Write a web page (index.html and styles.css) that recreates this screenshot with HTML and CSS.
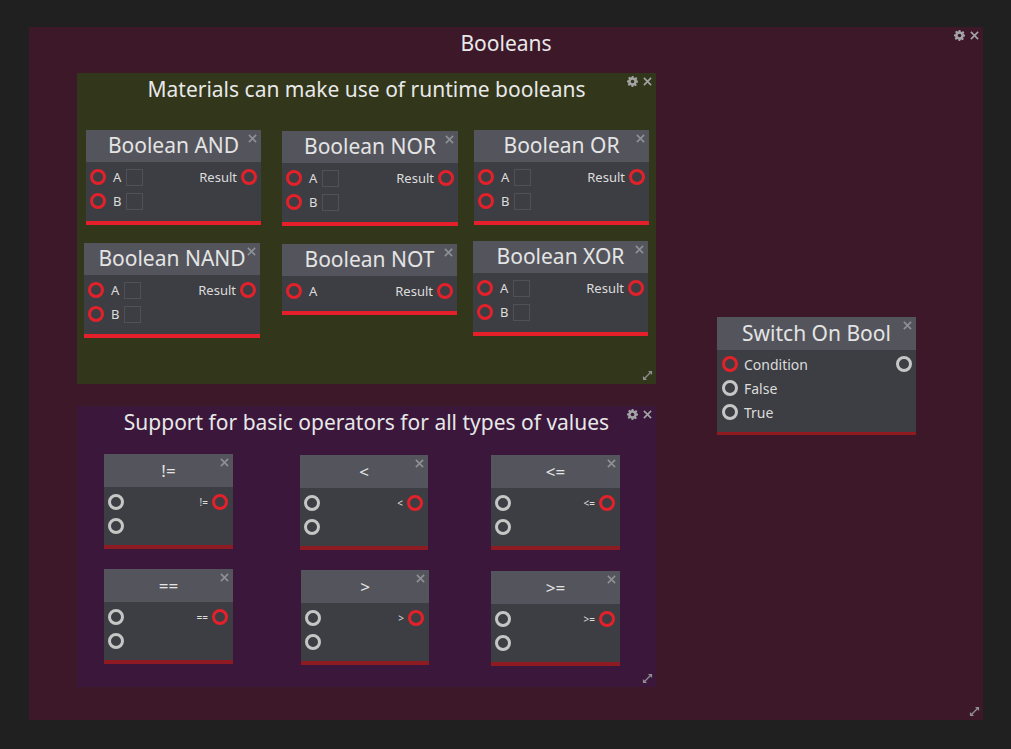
FILE: index.html
```html
<!DOCTYPE html>
<html>
<head>
<meta charset="utf-8">
<link rel="stylesheet" href="styles.css">
</head>
<body>
<div class="canvas">
  <svg width="0" height="0" class="defs">
    <defs>
      <symbol id="gear" viewBox="0 0 12 12">
        <path fill="currentColor" fill-rule="evenodd" d="M5 0h2l.3 1.6 1.2.5 1.4-.9 1.4 1.4-.9 1.4.5 1.2L12 5v2l-1.6.3-.5 1.2.9 1.4-1.4 1.4-1.4-.9-1.2.5L7 12H5l-.3-1.6-1.2-.5-1.4.9-1.4-1.4.9-1.4-.5-1.2L0 7V5l1.6-.3.5-1.2-.9-1.4 1.4-1.4 1.4.9 1.2-.5zM6 4a2 2 0 1 0 0 4 2 2 0 1 0 0-4z"/>
      </symbol>
      <symbol id="close" viewBox="0 0 10 10">
        <path d="M1 1L9 9M9 1L1 9" stroke="currentColor" stroke-width="1.8" fill="none"/>
      </symbol>
      <symbol id="resize" viewBox="0 0 12 12">
        <path d="M2.5 9.5L9.5 2.5" stroke="currentColor" stroke-width="1.4" fill="none"/>
        <path d="M1 11V6.5L5.5 11z M11 1v4.5L6.5 1z" fill="currentColor"/>
      </symbol>
    </defs>
  </svg>

  <div class="frame f-outer">
    <div class="frame-title">Booleans</div>
    <div class="frame-tools"><svg class="ic-gear"><use href="#gear"/></svg><svg class="ic-x"><use href="#close"/></svg></div>
    <svg class="ic-resize"><use href="#resize"/></svg>
  </div>

  <div class="frame f-green">
    <div class="frame-title">Materials can make use of runtime booleans</div>
    <div class="frame-tools"><svg class="ic-gear"><use href="#gear"/></svg><svg class="ic-x"><use href="#close"/></svg></div>
    <svg class="ic-resize"><use href="#resize"/></svg>
  </div>

  <div class="frame f-purple">
    <div class="frame-title">Support for basic operators for all types of values</div>
    <div class="frame-tools"><svg class="ic-gear"><use href="#gear"/></svg><svg class="ic-x"><use href="#close"/></svg></div>
    <svg class="ic-resize"><use href="#resize"/></svg>
  </div>

  <!-- Boolean nodes -->
  <div class="node bool n-and">
    <div class="node-head">Boolean AND<svg class="node-x"><use href="#close"/></svg></div>
    <div class="node-body">
      <div class="row"><span class="pin red"></span><span class="lbl">A</span><span class="chk"></span><span class="out">Result</span><span class="pin red"></span></div>
      <div class="row"><span class="pin red"></span><span class="lbl">B</span><span class="chk"></span></div>
    </div>
  </div>

  <div class="node bool n-nor">
    <div class="node-head">Boolean NOR<svg class="node-x"><use href="#close"/></svg></div>
    <div class="node-body">
      <div class="row"><span class="pin red"></span><span class="lbl">A</span><span class="chk"></span><span class="out">Result</span><span class="pin red"></span></div>
      <div class="row"><span class="pin red"></span><span class="lbl">B</span><span class="chk"></span></div>
    </div>
  </div>

  <div class="node bool n-or">
    <div class="node-head">Boolean OR<svg class="node-x"><use href="#close"/></svg></div>
    <div class="node-body">
      <div class="row"><span class="pin red"></span><span class="lbl">A</span><span class="chk"></span><span class="out">Result</span><span class="pin red"></span></div>
      <div class="row"><span class="pin red"></span><span class="lbl">B</span><span class="chk"></span></div>
    </div>
  </div>

  <div class="node bool n-nand">
    <div class="node-head">Boolean NAND<svg class="node-x"><use href="#close"/></svg></div>
    <div class="node-body">
      <div class="row"><span class="pin red"></span><span class="lbl">A</span><span class="chk"></span><span class="out">Result</span><span class="pin red"></span></div>
      <div class="row"><span class="pin red"></span><span class="lbl">B</span><span class="chk"></span></div>
    </div>
  </div>

  <div class="node bool n-not">
    <div class="node-head">Boolean NOT<svg class="node-x"><use href="#close"/></svg></div>
    <div class="node-body">
      <div class="row"><span class="pin red"></span><span class="lbl">A</span><span class="out">Result</span><span class="pin red"></span></div>
    </div>
  </div>

  <div class="node bool n-xor">
    <div class="node-head">Boolean XOR<svg class="node-x"><use href="#close"/></svg></div>
    <div class="node-body">
      <div class="row"><span class="pin red"></span><span class="lbl">A</span><span class="chk"></span><span class="out">Result</span><span class="pin red"></span></div>
      <div class="row"><span class="pin red"></span><span class="lbl">B</span><span class="chk"></span></div>
    </div>
  </div>

  <!-- Switch -->
  <div class="node sw n-switch">
    <div class="node-head">Switch On Bool<svg class="node-x"><use href="#close"/></svg></div>
    <div class="node-body">
      <div class="row"><span class="pin red"></span><span class="lbl">Condition</span><span class="out"></span><span class="pin gray"></span></div>
      <div class="row"><span class="pin gray"></span><span class="lbl">False</span></div>
      <div class="row"><span class="pin gray"></span><span class="lbl">True</span></div>
    </div>
  </div>

  <!-- Operator nodes -->
  <div class="node op n-ne">
    <div class="node-head">!=<svg class="node-x"><use href="#close"/></svg></div>
    <div class="node-body">
      <div class="row"><span class="pin gray"></span><span class="out">!=</span><span class="pin red"></span></div>
      <div class="row"><span class="pin gray"></span></div>
    </div>
  </div>

  <div class="node op n-lt">
    <div class="node-head">&lt;<svg class="node-x"><use href="#close"/></svg></div>
    <div class="node-body">
      <div class="row"><span class="pin gray"></span><span class="out">&lt;</span><span class="pin red"></span></div>
      <div class="row"><span class="pin gray"></span></div>
    </div>
  </div>

  <div class="node op n-le">
    <div class="node-head">&lt;=<svg class="node-x"><use href="#close"/></svg></div>
    <div class="node-body">
      <div class="row"><span class="pin gray"></span><span class="out">&lt;=</span><span class="pin red"></span></div>
      <div class="row"><span class="pin gray"></span></div>
    </div>
  </div>

  <div class="node op n-eq">
    <div class="node-head">==<svg class="node-x"><use href="#close"/></svg></div>
    <div class="node-body">
      <div class="row"><span class="pin gray"></span><span class="out">==</span><span class="pin red"></span></div>
      <div class="row"><span class="pin gray"></span></div>
    </div>
  </div>

  <div class="node op n-gt">
    <div class="node-head">&gt;<svg class="node-x"><use href="#close"/></svg></div>
    <div class="node-body">
      <div class="row"><span class="pin gray"></span><span class="out">&gt;</span><span class="pin red"></span></div>
      <div class="row"><span class="pin gray"></span></div>
    </div>
  </div>

  <div class="node op n-ge">
    <div class="node-head">&gt;=<svg class="node-x"><use href="#close"/></svg></div>
    <div class="node-body">
      <div class="row"><span class="pin gray"></span><span class="out">&gt;=</span><span class="pin red"></span></div>
      <div class="row"><span class="pin gray"></span></div>
    </div>
  </div>
</div>
</body>
</html>
```
FILE: styles.css
```css
html, body {
  margin: 0;
  padding: 0;
  width: 1011px;
  height: 749px;
  overflow: hidden;
  background: #202020;
  font-family: "Noto Sans", "DejaVu Sans", sans-serif;
  color: #e2e2e2;
}

.canvas {
  position: relative;
  width: 1011px;
  height: 749px;
}

.defs {
  position: absolute;
}

/* ---------- frames (comment boxes) ---------- */
.frame {
  position: absolute;
  box-sizing: border-box;
}

.f-outer {
  left: 29px;
  top: 27px;
  width: 954px;
  height: 693px;
  background: #3c1829;
}

.f-green {
  left: 77px;
  top: 73px;
  width: 579px;
  height: 311px;
  background: #32361a;
}

.f-purple {
  left: 77px;
  top: 406px;
  width: 579px;
  height: 281px;
  background: #3a173b;
}

.frame-title {
  text-align: center;
  font-size: 21px;
  line-height: 30px;
  padding-top: 1px;
  color: #e8e8e8;
}

.f-green .frame-title,
.f-purple .frame-title {
  padding-top: 1px;
}

.frame-tools {
  position: absolute;
  right: 4px;
  top: 3px;
  display: flex;
  gap: 5px;
  align-items: center;
  color: #a3a3a6;
}

.ic-gear {
  width: 11px;
  height: 11px;
}

.ic-x {
  width: 9px;
  height: 9px;
}

.ic-resize {
  position: absolute;
  right: 3px;
  bottom: 3px;
  width: 11px;
  height: 11px;
  color: #8e8e90;
}

/* ---------- nodes ---------- */
.node {
  position: absolute;
  background: #3d3e43;
  display: flex;
  flex-direction: column;
}

.node-head {
  position: relative;
  background: #54555c;
  text-align: center;
  color: #e4e4e4;
}

.node-x {
  position: absolute;
  right: 4px;
  top: 4px;
  width: 9px;
  height: 9px;
  color: #8f9096;
}

.node-body {
  display: flex;
  flex-direction: column;
  gap: 4px;
  padding: 5px 4px 10px;
}

.row {
  display: flex;
  align-items: center;
  height: 20px;
}

.pin {
  box-sizing: border-box;
  width: 16px;
  height: 16px;
  border-radius: 50%;
  border: 3px solid #e3212b;
  flex: none;
}

.pin.gray {
  border-color: #c6c6c6;
}

.lbl {
  margin-left: 7px;
  font-size: 13px;
  color: #dcdcdc;
}

.chk {
  box-sizing: border-box;
  width: 17px;
  height: 17px;
  border: 1px solid #505157;
  margin-left: 5px;
}

.out {
  margin-left: auto;
  margin-right: 4px;
  font-size: 13px;
  color: #dcdcdc;
}

/* boolean nodes */
.bool .node-head {
  height: 32px;
  font-size: 21px;
  line-height: 31px;
}

.bool {
  border-bottom: 4px solid #e5202a;
}

.n-and  { left: 86px;  top: 130px; width: 175px; }
.n-nor  { left: 282px; top: 131px; width: 176px; }
.n-or   { left: 474px; top: 130px; width: 175px; }
.n-nand { left: 84px;  top: 243px; width: 176px; }
.n-not  { left: 282px; top: 244px; width: 175px; }
.n-xor  { left: 473px; top: 241px; width: 175px; }

/* switch */
.sw {
  border-bottom: 3px solid #8f1b21;
}

.sw .node-head {
  height: 33px;
  font-size: 21px;
  line-height: 32px;
}

.sw .node-body {
  padding: 4px 4px 10px 5px;
}

.sw .lbl {
  font-size: 14px;
  margin-left: 6px;
}

.n-switch { left: 717px; top: 317px; width: 199px; }

/* operator nodes */
.op {
  border-bottom: 4px solid #8e1b21;
}

.op .node-head {
  height: 33px;
  font-size: 17px;
  line-height: 33px;
}

.op .node-body {
  padding: 5px 5px 9px 4px;
}

.op .out {
  font-size: 10px;
  margin-right: 4px;
}

.n-ne { left: 104px; top: 454px; width: 129px; }
.n-lt { left: 300px; top: 455px; width: 128px; }
.n-le { left: 491px; top: 455px; width: 129px; }
.n-eq { left: 104px; top: 569px; width: 129px; }
.n-gt { left: 301px; top: 570px; width: 128px; }
.n-ge { left: 491px; top: 571px; width: 129px; }
```
